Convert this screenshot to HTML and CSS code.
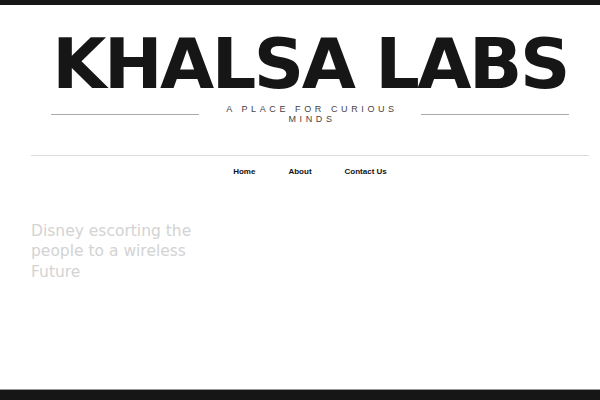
FILE: index.html
```html
<!DOCTYPE html>
<html>
<head>
<meta charset="utf-8">
<link rel="stylesheet" href="styles.css">
</head>
<body>
<div class="topbar"></div>
<div class="page">
  <header class="masthead">
    <h1 class="site-title">KHALSA LABS</h1>
    <div class="tagline-row">
      <span class="rule"></span>
      <p class="tagline">A PLACE FOR CURIOUS MINDS</p>
      <span class="rule"></span>
    </div>
  </header>
  <nav class="nav">
    <a href="#">Home</a>
    <a href="#">About</a>
    <a href="#">Contact Us</a>
  </nav>
  <main class="content">
    <h2 class="post-title">Disney escorting the people to a wireless Future</h2>
  </main>
</div>
<div class="bottombar"></div>
</body>
</html>
```
FILE: styles.css
```css
html, body {
  margin: 0;
  padding: 0;
  height: 100%;
  background: #fff;
}
body {
  display: flex;
  flex-direction: column;
  font-family: "DejaVu Sans", sans-serif;
}
.topbar {
  height: 5px;
  background: #161616;
  flex: none;
}
.page {
  flex: 1;
  margin: 0 11px 0 31px;
}
.masthead {
  padding: 0 20px;
}
.site-title {
  margin: 19px 0 0;
  font-family: "DejaVu Sans", sans-serif;
  font-weight: bold;
  font-size: 70px;
  line-height: 80px;
  letter-spacing: -2.5px;
  text-align: center;
  color: #161616;
}
.tagline-row {
  display: flex;
  align-items: flex-start;
  margin-top: 0;
}
.rule {
  flex: 1;
  height: 1px;
  background: #aaa;
  margin-top: 10px;
}
.tagline {
  width: 222px;
  margin: 0;
  padding: 0 0 0 4px;
  box-sizing: border-box;
  font-family: "Liberation Sans", sans-serif;
  font-size: 9px;
  line-height: 10px;
  letter-spacing: 3.6px;
  text-align: center;
  color: #444;
}
.nav {
  margin-top: 31px;
  border-top: 1px solid #ddd;
  display: flex;
  justify-content: center;
  gap: 33px;
  padding-top: 11px;
}
.nav a {
  font-family: "Liberation Sans", sans-serif;
  font-size: 8px;
  font-weight: bold;
  color: #111;
  text-decoration: none;
}
.content {
  margin-top: 44.5px;
}
.post-title {
  width: 190px;
  margin: 0;
  font-weight: normal;
  font-size: 15.5px;
  line-height: 20.7px;
  color: #d3d3d3;
}
.bottombar {
  flex: none;
  height: 10px;
  background: #161616;
  border-top: 1px solid #999;
}
```
